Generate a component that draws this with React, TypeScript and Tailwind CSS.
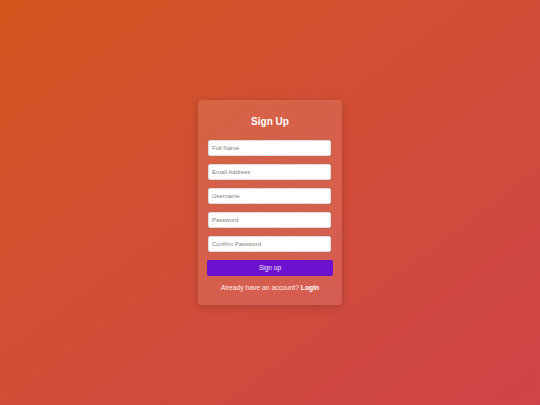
export default function App() {
  const fields = ["Full Name", "Email Address", "Username", "Password", "Confirm Password"]

  return (
    <div className="flex h-[405px] w-[540px] items-center justify-center bg-gradient-to-br from-[#d3561d] to-[#cf4448] font-['Liberation_Sans',Arial,sans-serif]">
      <div className="flex w-[144px] flex-col rounded-[4px] bg-white/10 px-[9px] pt-[15px] pb-[13px] shadow-[0_2px_8px_rgba(0,0,0,0.18)]">
        <h1 className="text-center text-[10px] leading-[13px] font-bold text-white">Sign Up</h1>

        <div className="mt-[12px] flex flex-col gap-[8px]">
          {fields.map(f => (
            <input
              key={f}
              placeholder={f}
              type={f.includes("Password") ? "password" : "text"}
              className="ml-[1px] h-[16px] w-[123px] rounded-[2px] border border-[#dcdcdc] bg-white px-[3px] text-[6px] text-[#333] placeholder:text-[#808080] focus:outline-none"
            />
          ))}
        </div>

        <button className="mt-[8px] h-[16px] w-full rounded-[2px] bg-[#6c12cf] text-[6.5px] text-white/90">
          Sign up
        </button>

        <p className="mt-[7px] text-center text-[6.75px] leading-[9px] text-white/90">
          Already have an account? <span className="font-bold text-white">Login</span>
        </p>
      </div>
    </div>
  )
}
